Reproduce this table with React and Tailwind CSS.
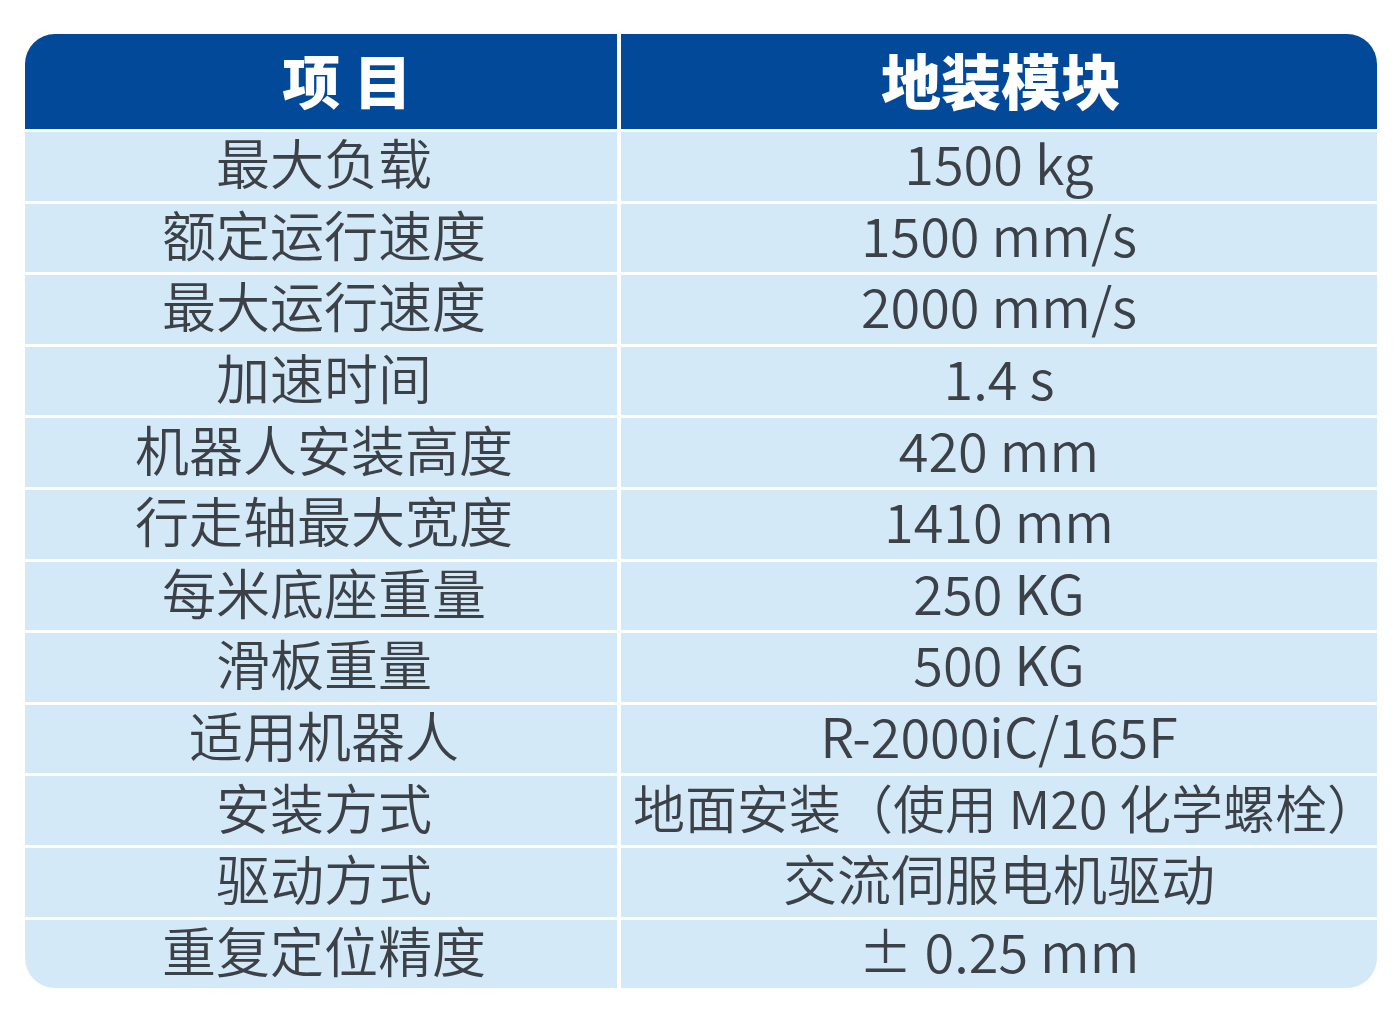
const rows = [
  ["最大负载", "1500 kg"],
  ["额定运行速度", "1500 mm/s"],
  ["最大运行速度", "2000 mm/s"],
  ["加速时间", "1.4 s"],
  ["机器人安装高度", "420 mm"],
  ["行走轴最大宽度", "1410 mm"],
  ["每米底座重量", "250 KG"],
  ["滑板重量", "500 KG"],
  ["适用机器人", "R-2000iC/165F"],
  ["安装方式", "地面安装（使用 M20 化学螺栓）", true],
  ["驱动方式", "交流伺服电机驱动"],
  ["重复定位精度", "± 0.25 mm"],
];

const App = () => {
  return (
    <div className="w-[1400px] h-[1019px] bg-white pt-[34px] pl-[25px] font-['Noto_Sans_CJK_SC',sans-serif]">
      <div className="grid w-[1352px] grid-cols-[592px_756px] grid-rows-[95px_repeat(12,68.6px)] gap-x-[4px] gap-y-[3px] rounded-[30px] overflow-hidden">
        <div className="bg-[#02499a] flex items-center justify-center pl-[52px] pb-[6px] text-white font-black text-[58px] leading-none">
          项 目
        </div>
        <div className="bg-[#02499a] flex items-center justify-center pl-[4px] pb-[6px] text-white font-black text-[60px] leading-none">
          地装模块
        </div>
        {rows.map(([label, value, small]) => (
          <>
            <div key={label} className="bg-[#d4e9f8] flex items-center justify-center pl-[6px] pb-[8px] text-[#3c4148] font-[350] text-[54px] leading-none">
              {label}
            </div>
            <div
              key={label + "-v"}
              className={
                small
                  ? "bg-[#d4e9f8] flex items-center justify-center pl-[14px] pb-[8px] text-[#3c4148] font-[350] text-[52px] leading-none whitespace-nowrap"
                  : "bg-[#d4e9f8] flex items-center justify-center pb-[8px] text-[#3c4148] font-[350] text-[54px] leading-none whitespace-nowrap"
              }
            >
              {value}
            </div>
          </>
        ))}
      </div>
    </div>
  );
};

export default App;
